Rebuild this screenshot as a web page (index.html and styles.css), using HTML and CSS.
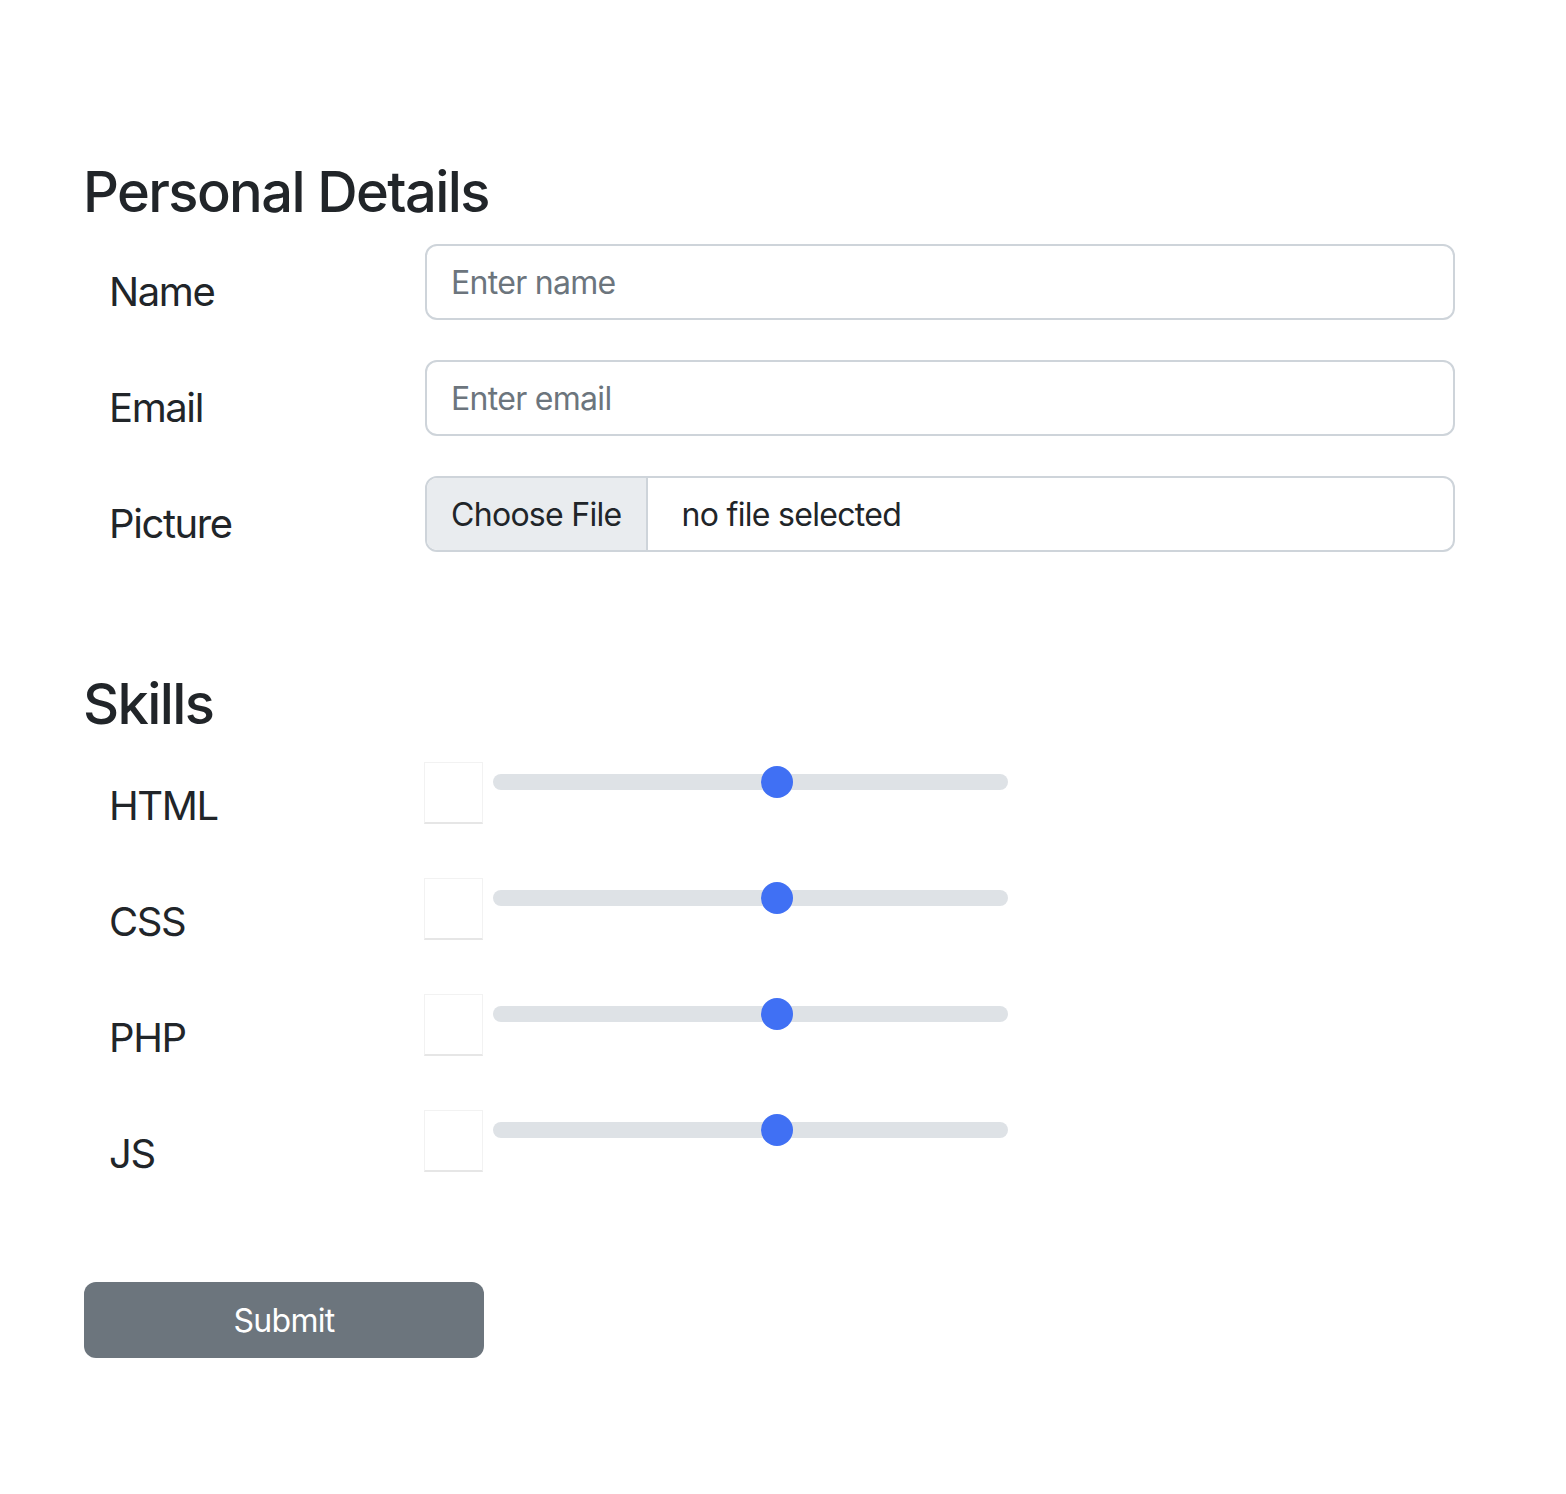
FILE: index.html
```html
<!DOCTYPE html>
<html lang="en">
<head>
<meta charset="utf-8">
<title>Form</title>
<link rel="stylesheet" href="styles.css">
</head>
<body>
<form class="page">
  <h3 class="heading">Personal Details</h3>
  <div class="row">
    <label class="label" for="name">Name</label>
    <input class="control" id="name" type="text" placeholder="Enter name">
  </div>
  <div class="row">
    <label class="label" for="email">Email</label>
    <input class="control" id="email" type="email" placeholder="Enter email">
  </div>
  <div class="row">
    <label class="label">Picture</label>
    <div class="file">
      <span class="file-btn">Choose File</span>
      <span class="file-name">no file selected</span>
    </div>
  </div>

  <h3 class="heading skills-heading">Skills</h3>
  <div class="row skill">
    <label class="label">HTML</label>
    <div class="skill-controls">
      <div class="box"></div>
      <input class="range" type="range" min="0" max="1000" value="555">
    </div>
  </div>
  <div class="row skill">
    <label class="label">CSS</label>
    <div class="skill-controls">
      <div class="box"></div>
      <input class="range" type="range" min="0" max="1000" value="555">
    </div>
  </div>
  <div class="row skill">
    <label class="label">PHP</label>
    <div class="skill-controls">
      <div class="box"></div>
      <input class="range" type="range" min="0" max="1000" value="555">
    </div>
  </div>
  <div class="row skill">
    <label class="label">JS</label>
    <div class="skill-controls">
      <div class="box"></div>
      <input class="range" type="range" min="0" max="1000" value="555">
    </div>
  </div>

  <button class="submit" type="button">Submit</button>
</form>
</body>
</html>
```

FILE: styles.css
```css
* { box-sizing: border-box; }
html, body { margin: 0; background: #fff; }
body {
  font-family: Inter, "Noto Sans", "Liberation Sans", sans-serif;
  color: #212529;
}
.page {
  padding: 159px 111px 0 83px;
}
.heading {
  margin: 0 0 18px;
  font-size: 56px;
  font-weight: 500;
  line-height: 67px;
  letter-spacing: -1.6px;
}
.skills-heading {
  margin-top: 119px;
  margin-bottom: 20px;
}
.row {
  display: grid;
  grid-template-columns: 342px 1fr;
  height: 76px;
  margin-bottom: 40px;
}
.label {
  padding: 18px 0 0 26px;
  font-size: 40px;
  line-height: 60px;
  letter-spacing: -1.4px;
}
.control {
  height: 76px;
  width: 100%;
  border: 2px solid #ced4da;
  border-radius: 12px;
  padding: 0 24px;
  font-family: inherit;
  font-size: 32px;
  letter-spacing: -0.7px;
  color: #212529;
  background: #fff;
  outline: none;
}
.control::placeholder { color: #6c757d; opacity: 1; }
.file {
  height: 76px;
  display: flex;
  align-items: stretch;
  border: 2px solid #ced4da;
  border-radius: 12px;
  overflow: hidden;
  font-size: 32px;
  letter-spacing: -0.7px;
}
.file-btn {
  display: flex;
  align-items: center;
  padding: 0 24px;
  background: #e9ecef;
  border-right: 2px solid #ced4da;
}
.file-name {
  display: flex;
  align-items: center;
  padding-left: 34px;
}
.skill-controls {
  display: flex;
  align-items: flex-start;
  gap: 10px;
  padding-top: 4px;
}
.box {
  width: 59px;
  height: 62px;
  margin-left: -1px;
  border: 1px solid #f2f2f2;
  border-bottom: 2px solid #e6e6e6;
  background: #fff;
}
.range {
  -webkit-appearance: none;
  appearance: none;
  width: 515px;
  height: 32px;
  margin: 4px 0 0;
  background: transparent;
}
.range::-webkit-slider-runnable-track {
  height: 16px;
  background: #dee2e6;
  border-radius: 8px;
}
.range::-webkit-slider-thumb {
  -webkit-appearance: none;
  appearance: none;
  width: 32px;
  height: 32px;
  border-radius: 50%;
  background: #4070f4;
  border: 0;
  margin-top: -8px;
}
.submit {
  display: block;
  margin-top: 100px;
  width: 400px;
  height: 76px;
  border: 0;
  border-radius: 12px;
  background: #6c757d;
  color: #fff;
  font-family: inherit;
  font-size: 32px;
  letter-spacing: -0.7px;
  margin-left: 1px;
}
```
